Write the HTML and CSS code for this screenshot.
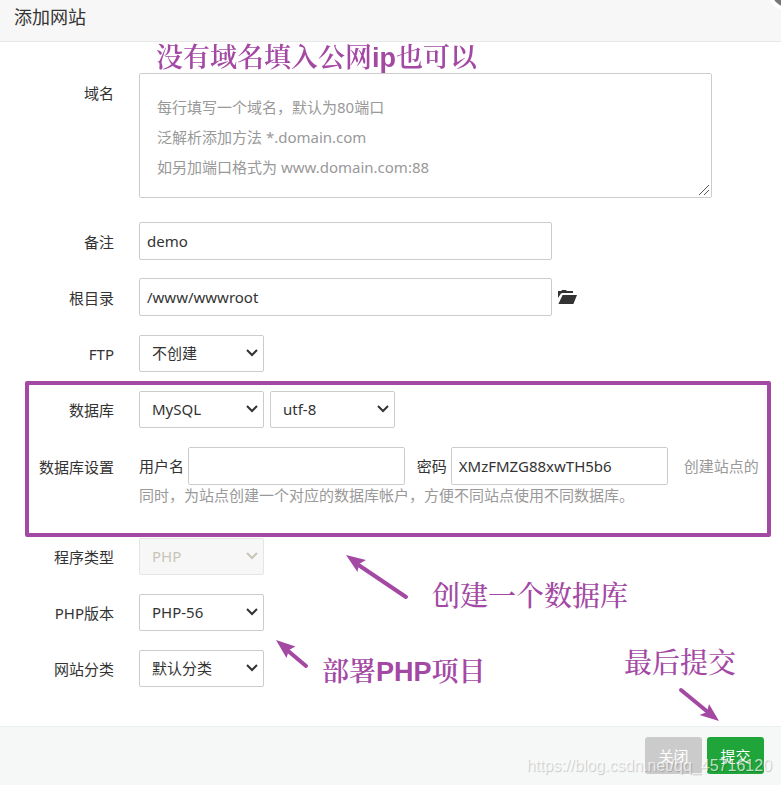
FILE: index.html
```html
<!DOCTYPE html>
<html lang="zh-CN">
<head>
<meta charset="utf-8">
<meta name="viewport" content="width=device-width, initial-scale=1">
<title>添加网站</title>
<link rel="stylesheet" href="styles.css">
</head>
<body>
<main class="dialog">
  <header class="dialog-header">
    <h1 class="dialog-title">添加网站</h1>
    <button class="dialog-close" type="button" aria-label="关闭窗口"></button>
  </header>

  <form class="site-form">
    <div class="form-body">
      <div class="row">
        <label class="row-label" for="domains">域名</label>
        <div class="row-field">
          <textarea class="control domains" id="domains" placeholder="每行填写一个域名，默认为80端口&#10;泛解析添加方法 *.domain.com&#10;如另加端口格式为 www.domain.com:88"></textarea>
        </div>
      </div>
      <div class="row">
        <label class="row-label" for="remark">备注</label>
        <div class="row-field"><input class="control wide" id="remark" type="text" value="demo"></div>
      </div>
      <div class="row">
        <label class="row-label" for="root">根目录</label>
        <div class="row-field">
          <input class="control wide" id="root" type="text" value="/www/wwwroot">
          <button class="folder" type="button" aria-label="选择目录">
            <svg width="20" height="16" viewBox="0 0 20 16" aria-hidden="true">
              <path fill="#333" d="M0 9V2h3.200L4 1h4l.8 1H15v2H4.200L3 4.600z"/>
              <path fill="#333" d="M4.600 6H19L15.400 15H.4z"/>
            </svg>
          </button>
        </div>
      </div>
      <div class="row">
        <label class="row-label" for="ftp">FTP</label>
        <div class="row-field"><select class="control" id="ftp"><option>不创建</option></select></div>
      </div>

      <div class="database">
        <div class="row">
          <label class="row-label" for="db">数据库</label>
          <div class="row-field">
            <select class="control" id="db"><option>MySQL</option></select>
            <select class="control" aria-label="编码"><option>utf-8</option></select>
          </div>
        </div>
        <div class="row">
          <span class="row-label">数据库设置</span>
          <div class="row-text">
            <label for="db-user">用户名</label>
            <input class="control account" id="db-user" type="text">
            <label class="password-label" for="db-pass">密码</label>
            <input class="control account" id="db-pass" type="text" value="XMzFMZG88xwTH5b6">
            <span class="hint">创建站点的同时，为站点创建一个对应的数据库帐户，方便不同站点使用不同数据库。</span>
          </div>
        </div>
      </div>

      <div class="row">
        <label class="row-label" for="type">程序类型</label>
        <div class="row-field"><select class="control" id="type" disabled><option>PHP</option></select></div>
      </div>
      <div class="row">
        <label class="row-label" for="version">PHP版本</label>
        <div class="row-field"><select class="control" id="version"><option>PHP-56</option></select></div>
      </div>
      <div class="row">
        <label class="row-label" for="category">网站分类</label>
        <div class="row-field"><select class="control" id="category"><option>默认分类</option></select></div>
      </div>
    </div>

    <footer class="dialog-footer">
      <button class="btn btn-close" type="button">关闭</button>
      <button class="btn btn-submit" type="submit">提交</button>
    </footer>
  </form>

  <p class="note note-domain">没有域名填入公网ip也可以</p>
  <p class="note note-database">创建一个数据库</p>
  <p class="note note-php">部署PHP项目</p>
  <p class="note note-submit">最后提交</p>

  <svg class="arrow arrow-database" width="70" height="50" viewBox="0 0 70 50" aria-hidden="true">
    <path class="shaft" d="M14 12L63 45"/>
    <path class="head" d="M3 3L23 8L16 12L14.500 20z"/>
  </svg>
  <svg class="arrow arrow-php" width="40" height="36" viewBox="0 0 40 36" aria-hidden="true">
    <path class="shaft" d="M14 13L33 29"/>
    <path class="head" d="M3 3L22.500 9.500L16 13L13.500 21z"/>
  </svg>
  <svg class="arrow arrow-submit" width="46" height="40" viewBox="0 0 46 40" aria-hidden="true">
    <path class="shaft" d="M4 4L32 27"/>
    <path class="head" d="M42 35L32 18L30 26L22.500 29z"/>
  </svg>
  <p class="watermark">https://blog.csdn.net/qq_45716120</p>
</main>
</body>
</html>
```
FILE: styles.css
```css
* {
  box-sizing: border-box;
}

body {
  margin: 0;
  background: #fff;
  color: #333;
  font: 15px/21px "Noto Sans", "Noto Sans CJK SC", sans-serif;
}

p {
  margin: 0;
}

button,
input,
select,
textarea {
  font: inherit;
  color: inherit;
}

.dialog {
  position: relative;
  overflow: hidden;
}

.dialog-header {
  padding: 0 14px 7px;
  border-bottom: 1px solid #e8e8e8;
  background: #f7f7f7;
}

.dialog-title {
  margin: 0;
  font-size: 18px;
  line-height: 34px;
  font-weight: 400;
}

.dialog-close {
  position: absolute;
  top: -27px;
  right: -25px;
  width: 38px;
  height: 38px;
  padding: 0;
  border: 4px solid #fff;
  border-radius: 50%;
  background: #777;
}

.form-body,
.database {
  display: flex;
  flex-direction: column;
  gap: 18px;
}

.form-body {
  padding: 31px 0 39px;
}

.row {
  display: grid;
  grid-template-columns: 114px 1fr;
  column-gap: 25px;
}

.row-label {
  padding-top: 10px;
  text-align: right;
}

.row-field {
  display: flex;
  align-items: center;
  gap: 6px;
  min-height: 38px;
  padding-right: 20px;
}

.row-text {
  padding-right: 15px;
}

.control {
  height: 38px;
  padding: 0 7px;
  border: 1px solid #ccc;
  border-radius: 2px;
  background: #fff;
}

select.control {
  width: 125px;
  height: 37px;
  padding: 0 24px 0 12px;
  appearance: none;
  background: #fff url("data:image/svg+xml,%3Csvg xmlns='http://www.w3.org/2000/svg' width='12' height='8' viewBox='0 0 12 8'%3E%3Cpath d='M1 1l5 5 5-5' fill='none' stroke='%23333' stroke-width='2'/%3E%3C/svg%3E") no-repeat right 5px center;
}

select.control:disabled {
  border-color: #e5e5e5;
  background: #f7f7f7 url("data:image/svg+xml,%3Csvg xmlns='http://www.w3.org/2000/svg' width='12' height='8' viewBox='0 0 12 8'%3E%3Cpath d='M1 1l5 5 5-5' fill='none' stroke='%23c8c5b8' stroke-width='2'/%3E%3C/svg%3E") no-repeat right 5px center;
  color: #c8c5b8;
  opacity: 1;
}

.wide {
  width: 413px;
  max-width: 100%;
}

.domains {
  display: block;
  width: 573px;
  max-width: 100%;
  height: 125px;
  margin-bottom: 6px;
  padding: 18px 17px;
  line-height: 30px;
}

.domains::-webkit-resizer {
  background: url("data:image/svg+xml,%3Csvg xmlns='http://www.w3.org/2000/svg' width='15' height='15' viewBox='0 0 15 15'%3E%3Cpath d='M3 13L13 3M8 13l5-5' fill='none' stroke='%23555'/%3E%3C/svg%3E") no-repeat right bottom;
}

.domains::placeholder,
.hint {
  color: #999;
}

.account {
  width: 217px;
}

.password-label {
  margin-left: 8px;
}

.hint {
  margin-left: 12px;
}

.folder {
  display: flex;
  padding: 0;
  border: 0;
  background: none;
}

.database {
  position: relative;
  gap: 19px;
  padding-bottom: 13px;
}

.database::after {
  content: "";
  position: absolute;
  inset: -9px 10px -18px 25px;
  border: 4px solid #a349a4;
  border-radius: 2px;
  pointer-events: none;
}

.dialog-footer {
  display: flex;
  justify-content: flex-end;
  gap: 5px;
  padding: 10px 17px 11px;
  border-top: 1px solid #e9eeee;
  background: #f6f8f8;
}

.btn {
  width: 57px;
  height: 37px;
  padding: 2px 0 0;
  border: 0;
  border-radius: 3px;
  color: #fff;
}

.btn-close {
  background: #cbcbcb;
}

.btn-submit {
  background: #20a53a;
}

.note {
  position: absolute;
  color: #a349a4;
  font: 500 28px/36px "Liberation Sans", "Noto Serif CJK SC", "Noto Sans CJK SC", serif;
  white-space: nowrap;
}

.note-domain {
  top: 40px;
  left: 156px;
  font-size: 27px;
  font-weight: 600;
}

.note-database {
  top: 579px;
  left: 432px;
}

.note-php {
  top: 654px;
  left: 322px;
  font-size: 27px;
  font-weight: 600;
}

.note-submit {
  top: 646px;
  left: 624px;
}

.arrow {
  position: absolute;
}

.arrow-database {
  top: 552px;
  left: 343px;
}

.arrow-php {
  top: 637px;
  left: 273px;
}

.arrow-submit {
  top: 686px;
  left: 677px;
}

.shaft {
  fill: none;
  stroke: #a349a4;
  stroke-width: 4;
  stroke-linecap: round;
}

.head {
  fill: #a349a4;
}

.watermark {
  position: absolute;
  right: 9px;
  bottom: 9px;
  color: rgba(255, 255, 255, 0.7);
  font: 16px/20px "Liberation Sans", sans-serif;
  text-shadow: 1px 1px 1px rgba(0, 0, 0, 0.2);
  pointer-events: none;
}
```
